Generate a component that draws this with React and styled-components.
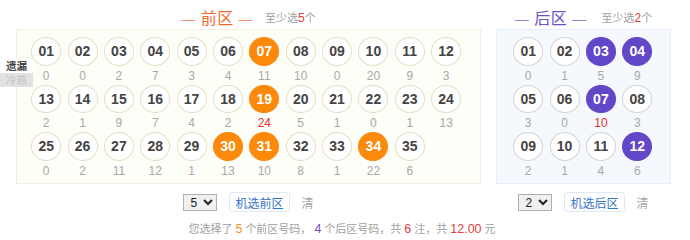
import React from 'react'
import styled, { createGlobalStyle } from 'styled-components'

const GlobalStyle = createGlobalStyle`
  body {
    margin: 0;
    background: #fff;
    font-family: "Liberation Sans", "Noto Sans CJK SC", sans-serif;
  }
`

const Page = styled.div`
  position: relative;
  width: 684px;
  padding-top: 4px;
`

const Areas = styled.div`
  display: flex;
  gap: 15px;
  padding-left: 16px;
`

const Area = styled.div`
  width: ${p => p.$width}px;
  display: flex;
  flex-direction: column;
  align-items: center;
`

const Title = styled.div`
  height: 25px;
  display: flex;
  align-items: center;
  gap: ${p => p.$gap}px;
  font-size: 16px;
`

const Heading = styled.span`
  color: ${p => p.$color};
  letter-spacing: 0.5px;
  span {
    opacity: 0.7;
    font-size: 14px;
  }
`

const Hint = styled.span`
  font-size: 11px;
  color: #a0a0a0;
  b {
    font-weight: normal;
    color: #e53d3d;
    font-size: 12px;
  }
`

const Board = styled.div`
  align-self: stretch;
  box-sizing: border-box;
  height: 155px;
  background: ${p => p.$bg};
  border: 1px solid ${p => p.$border};
  padding: 7px 0 0 ${p => p.$pad}px;
  display: grid;
  grid-template-columns: repeat(${p => p.$cols}, 36.36px);
  grid-auto-rows: 47.5px;
`

const Cell = styled.div`
  display: flex;
  flex-direction: column;
  align-items: center;
`

const Ball = styled.div`
  box-sizing: border-box;
  width: 30px;
  height: 30px;
  border-radius: 50%;
  display: flex;
  align-items: center;
  justify-content: center;
  font-size: 14px;
  font-weight: bold;
  color: ${p => (p.$on ? '#fff' : '#444')};
  background: ${p => (p.$on ? p.$fill : '#fff')};
  border: 1px solid ${p => (p.$on ? p.$fill : p.$ring)};
`

const Miss = styled.div`
  font-size: 12px;
  line-height: 18px;
  padding-top: 1px;
  color: ${p => (p.$hot ? '#e52e2e' : '#a8a8a8')};
`

const Controls = styled.div`
  display: flex;
  align-items: center;
  height: 32px;
  margin-top: 2px;
`

const Count = styled.select`
  width: 34px;
  height: 17px;
  font-size: 12px;
  font-family: "Liberation Sans", sans-serif;
  border: 1px solid #b0b0b0;
  background: #f0f0f0;
  padding: 0 0 0 2px;
  color: #222;
  border-radius: 0;
`

const RandomButton = styled.button`
  margin-left: 12px;
  height: 20px;
  padding: 0 5px;
  border: 1px solid #dfe8f3;
  border-radius: 3px;
  background: #fff;
  color: #3473c6;
  font-size: 12px;
  font-family: "Liberation Sans", "Noto Sans CJK SC", sans-serif;
`

const Clear = styled.span`
  margin-left: 12px;
  font-size: 12px;
  color: #a8a8a8;
`

const Summary = styled.div`
  text-align: center;
  font-size: 11px;
  color: #a0a0a0;
  line-height: 14px;
  margin-top: 4px;
`

const Num = styled.span`
  color: ${p => p.$color};
  font-size: 12.5px;
  margin: 0 3px;
`

const Tabs = styled.div`
  position: absolute;
  left: 0;
  top: 59px;
  width: 33px;
  display: flex;
  flex-direction: column;
`

const Tab = styled.div`
  height: 14px;
  line-height: 14px;
  font-size: 10.5px;
  text-align: center;
  color: ${p => (p.$active ? '#444' : '#c0c0c0')};
  background: ${p => (p.$active ? '#fff' : '#e2e2e2')};
  font-weight: ${p => (p.$active ? 'bold' : 'normal')};
`

const pad = n => String(n).padStart(2, '0')

const frontMiss = [0, 0, 2, 7, 3, 4, 11, 10, 0, 20, 9, 3, 2, 1, 9, 7, 4, 2, 24, 5, 1, 0, 1, 13, 0, 2, 11, 12, 1, 13, 10, 8, 1, 22, 6]
const frontOn = [7, 19, 30, 31, 34]
const backMiss = [0, 1, 5, 9, 3, 0, 10, 3, 2, 1, 4, 6]
const backOn = [3, 4, 7, 12]

const BallGrid = ({ miss, on, cols, pad: padL, bg, border, fill, ring }) => {
  const max = Math.max(...miss)
  return (
    <Board $cols={cols} $pad={padL} $bg={bg} $border={border}>
      {miss.map((m, i) => (
        <Cell key={i}>
          <Ball $on={on.includes(i + 1)} $fill={fill} $ring={ring}>{pad(i + 1)}</Ball>
          <Miss $hot={m === max}>{m}</Miss>
        </Cell>
      ))}
    </Board>
  )
}

const ControlRow = ({ value, label }) => (
  <Controls>
    <Count defaultValue={value}>
      {[1, 2, 3, 4, 5, 6, 7, 8, 9, 10].map(n => <option key={n} value={n}>{n}</option>)}
    </Count>
    <RandomButton>{label}</RandomButton>
    <Clear>清</Clear>
  </Controls>
)

export default function App() {
  return (
    <Page>
      <GlobalStyle />
      <Tabs>
        <Tab $active>遗漏</Tab>
        <Tab>冷热</Tab>
      </Tabs>
      <Areas>
        <Area $width={465}>
          <Title $gap={12}>
            <Heading $color="#ef6b2f"><span>—</span> 前区 <span>—</span></Heading>
            <Hint>至少选<b>5</b>个</Hint>
          </Title>
          <BallGrid miss={frontMiss} on={frontOn} cols={12} pad={11}
            bg="#fefef8" border="#f1efe0" fill="#fb8a0c" ring="#e4e0c6" />
          <ControlRow value={5} label="机选前区" />
        </Area>
        <Area $width={175}>
          <Title $gap={15}>
            <Heading $color="#6a52c7"><span>—</span> 后区 <span>—</span></Heading>
            <Hint>至少选<b>2</b>个</Hint>
          </Title>
          <BallGrid miss={backMiss} on={backOn} cols={4} pad={13}
            bg="#f5f9fe" border="#e5eef9" fill="#6347c9" ring="#d3d3d8" />
          <ControlRow value={2} label="机选后区" />
        </Area>
      </Areas>
      <Summary>
        您选择了<Num $color="#f7931e">5</Num>个前区号码，
        <Num $color="#6a52c7">4</Num>个后区号码，共<Num $color="#e53d3d">6</Num>注，共<Num $color="#e53d3d">12.00</Num>元
      </Summary>
    </Page>
  )
}
